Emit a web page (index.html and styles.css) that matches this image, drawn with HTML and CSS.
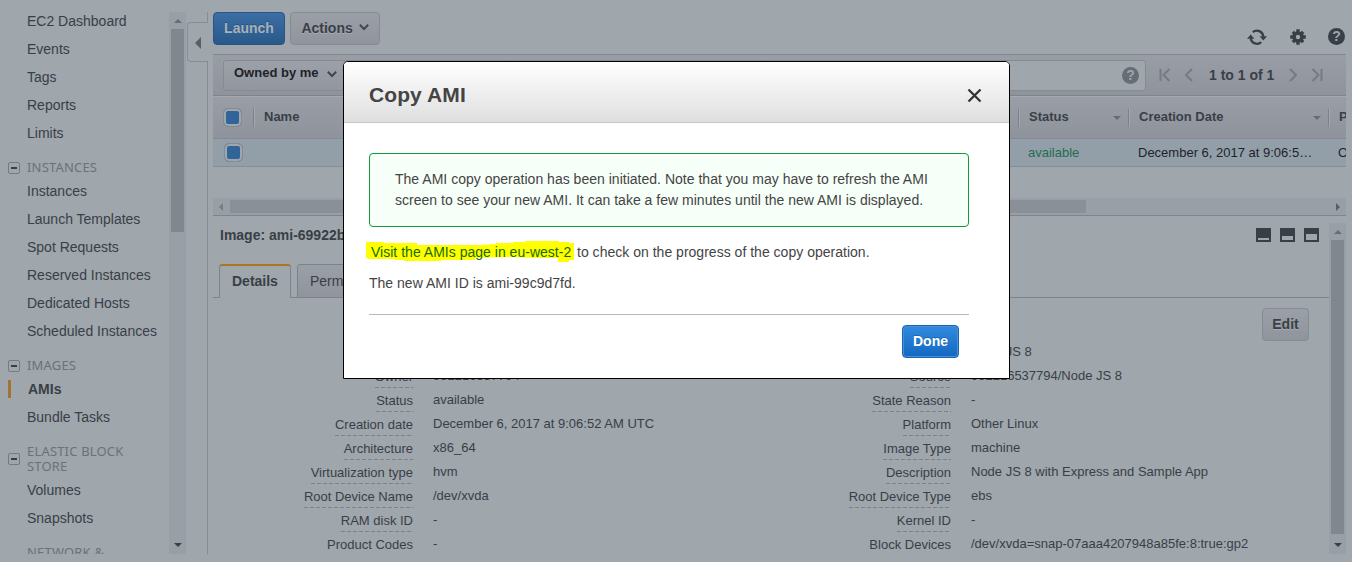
FILE: index.html
```
<!DOCTYPE html>
<html lang="en">
<head>
<meta charset="utf-8">
<title>EC2 Management Console</title>
<link rel="stylesheet" href="styles.css">
</head>
<body>
<div class="console">
  <aside class="sidebar">
    <nav class="nav">
      <a class="item">EC2 Dashboard</a><a class="item">Events</a><a class="item">Tags</a><a class="item">Reports</a><a class="item">Limits</a>
      <h3 class="group"><i class="minus"></i><span>INSTANCES</span></h3>
      <a class="item">Instances</a><a class="item">Launch Templates</a><a class="item">Spot Requests</a><a class="item">Reserved Instances</a><a class="item">Dedicated Hosts</a><a class="item">Scheduled Instances</a>
      <h3 class="group"><i class="minus"></i><span>IMAGES</span></h3>
      <a class="item current">AMIs</a><a class="item">Bundle Tasks</a>
      <h3 class="group"><i class="minus"></i><span>ELASTIC BLOCK STORE</span></h3>
      <a class="item">Volumes</a><a class="item">Snapshots</a>
      <h3 class="group"><span>NETWORK &amp;</span></h3>
    </nav>
    <div class="vscroll"><i class="up"></i><i class="vthumb nav-thumb"></i><i class="down"></i></div>
  </aside>
  <div class="gutter"><div class="gutter-top"></div><div class="handle"><i class="left-arrow"></i></div><div class="gutter-line"></div></div>
  <main class="main">
    <div class="toolbar">
      <button class="btn primary launch">Launch</button>
      <button class="btn actions">Actions <svg width="10" height="7" viewBox="0 0 10 7"><path d="M.8.8L5 5 9.200.8" fill="none" stroke="#40464e" stroke-width="2"/></svg></button>
      <div class="tools">
        <svg width="20" height="18" viewBox="0 0 20 18"><path d="M3.700 10.500A6.400 6.400 0 0 0 14.200 14.200M16.300 8.500A6.400 6.400 0 0 0 5.800 4.200" fill="none" stroke="#393f47" stroke-width="2.300"/><path d="M0 10.700h7.400L3.700 6.500zM12.600 8.300H20l-3.700 4.200z" fill="#393f47"/></svg>
        <svg width="16" height="16" viewBox="0 0 16 16"><g fill="#393f47"><circle cx="8" cy="8" r="5.800"/><path d="M6.300.2h3.400v15.600H6.300zM.2 6.300h15.600v3.400H.2z"/><path d="M6.300.7h3.400v14.600H6.300zM.7 6.300h14.600v3.400H.7z" transform="rotate(45 8 8)"/></g><circle cx="8" cy="8" r="2.200" fill="#9fa6ac"/></svg>
        <span class="help dark">?</span>
      </div>
    </div>
    <div class="filter">
      <div class="owned">Owned by me <svg width="10" height="7" viewBox="0 0 10 7"><path d="M.8.8L5 5 9.200.8" fill="none" stroke="#40464e" stroke-width="2"/></svg></div>
      <div class="search"><span class="help">?</span></div>
      <div class="pager">
        <svg width="12" height="14" viewBox="0 0 12 14"><path d="M1.500 1v12M10.500 1l-6 6 6 6"/></svg>
        <svg width="8" height="14" viewBox="0 0 8 14"><path d="M7 1L1 7l6 6"/></svg>
        <b>1 to 1 of 1</b>
        <svg width="8" height="14" viewBox="0 0 8 14"><path d="M1 1l6 6-6 6"/></svg>
        <svg width="12" height="14" viewBox="0 0 12 14"><path d="M10.500 1v12M1.500 1l6 6-6 6"/></svg>
      </div>
    </div>
    <div class="row head"><div class="cell"><i class="check"></i></div><div class="cell name"><span>Name</span></div><div class="cell status"><span>Status</span><i class="sort"></i></div><div class="cell date"><span>Creation Date</span><i class="sort"></i></div><div class="cell plat"><span>Platform</span></div></div>
    <div class="row data"><div class="cell"><i class="check"></i></div><div class="cell name"></div><div class="cell status">available</div><div class="cell date">December 6, 2017 at 9:06:5…</div><div class="cell plat">Other</div></div>
    <div class="hscroll"><i class="hleft"></i><i class="hthumb"></i><i class="hright"></i></div>
    <section class="details">
      <div class="pane">
        <div class="pane-top"><b class="image">Image: ami-69922b0d</b><i class="win small"></i><i class="win half"></i><i class="win full"></i></div>
        <div class="tabs"><div class="edge"></div><div class="tab active">Details</div><div class="gap"></div><div class="tab">Permissions</div><div class="fill"></div></div>
        <div class="edit-line"><button class="btn edit">Edit</button></div>
        <div class="facts">
          <dl>
            <dt><span>AMI ID</span></dt><dd>ami-69922b0d</dd>
            <dt><span>Owner</span></dt><dd>982216537794</dd>
            <dt><span>Status</span></dt><dd>available</dd>
            <dt><span>Creation date</span></dt><dd>December 6, 2017 at 9:06:52 AM UTC</dd>
            <dt><span>Architecture</span></dt><dd>x86_64</dd>
            <dt><span>Virtualization type</span></dt><dd>hvm</dd>
            <dt><span>Root Device Name</span></dt><dd>/dev/xvda</dd>
            <dt><span>RAM disk ID</span></dt><dd>-</dd>
            <dt><span>Product Codes</span></dt><dd>-</dd>
          </dl>
          <dl>
            <dt><span>AMI Name</span></dt><dd>Node JS 8</dd>
            <dt><span>Source</span></dt><dd>982216537794/Node JS 8</dd>
            <dt><span>State Reason</span></dt><dd>-</dd>
            <dt><span>Platform</span></dt><dd>Other Linux</dd>
            <dt><span>Image Type</span></dt><dd>machine</dd>
            <dt><span>Description</span></dt><dd>Node JS 8 with Express and Sample App</dd>
            <dt><span>Root Device Type</span></dt><dd>ebs</dd>
            <dt><span>Kernel ID</span></dt><dd>-</dd>
            <dt><span>Block Devices</span></dt><dd>/dev/xvda=snap-07aaa4207948a85fe:8:true:gp2</dd>
          </dl>
        </div>
      </div>
      <div class="vscroll pane-scroll"><i class="up"></i><i class="vthumb pane-thumb"></i><i class="down"></i></div>
    </section>
  </main>
</div>
<div class="modal">
  <header class="modal-head"><h2>Copy AMI</h2><svg width="15" height="15" viewBox="0 0 15 15"><path d="M1.500 1.500l12 12M13.500 1.500l-12 12" stroke="#333" stroke-width="2.300"/></svg></header>
  <div class="modal-body">
    <div class="notice"><div>The AMI copy operation has been initiated. Note that you may have to refresh the AMI</div><div>screen to see your new AMI. It can take a few minutes until the new AMI is displayed.</div></div>
    <p class="visit"><span class="marked"><svg class="marker" width="208" height="22" viewBox="0 0 208 22"><path d="M0 1h17l1 1h33v2h62l17-1V2h17V1h12V0h34v1h10v1h5v17h-5v2h-11v-4h-18l-34-1-31 1v2H75v1H38v-1H29v-1H2v-1H0z" fill="#ff0"/></svg><span class="link">Visit the AMIs page in eu-west-2</span></span><span class="rest">to check on the progress of the copy operation.</span></p>
    <p class="newid">The new AMI ID is ami-99c9d7fd.</p>
    <div class="modal-foot"><button class="btn done">Done</button></div>
  </div>
</div>
</body>
</html>
```
FILE: styles.css
```
* { box-sizing: border-box; }
body { margin: 0; width: 1352px; height: 562px; overflow: hidden; background: #9fa6ac; color: #393f47; font: 14px "Liberation Sans", Arial, sans-serif; }
i { display: block; font-style: normal; }
svg { flex: none; }
h2, h3, p, dl, dd { margin: 0; }
.console { display: flex; width: 1346px; height: 554px; overflow: hidden; }
.sidebar { display: flex; width: 186px; height: 554px; }
.nav { width: 169px; padding-top: 7px; overflow: hidden; }
.item { display: block; height: 28px; line-height: 28px; padding-left: 27px; white-space: nowrap; }
.current { font-weight: bold; padding-left: 28px; background: linear-gradient(#a37431, #a37431) 8px 5px / 3px 18px no-repeat; }
.group { display: flex; align-items: center; margin: 13px 0 2px; font: 13px/15px "Noto Sans", sans-serif; color: #6b7278; letter-spacing: .18px; }
.group span { width: 120px; margin-left: 7px; }
.group > span:first-child { margin-left: 27px; }
.minus { width: 12px; height: 12px; border: 1px solid #757b82; border-radius: 2px; margin-left: 8px; background: linear-gradient(#393f47, #393f47) 2px 4px / 6px 2px no-repeat; }
.vscroll { display: flex; flex-direction: column; align-items: center; width: 17px; margin-top: 12px; background: #989fa6; }
.up { border: 4px solid transparent; border-top: 0; border-bottom-color: #666d75; margin: 7px 0 6px; }
.down { border: 4px solid transparent; border-bottom: 0; border-top-color: #393f47; margin: auto 0 7px; }
.vthumb { width: 13px; background: #80878e; }
.nav-thumb { height: 203px; }
.gutter { width: 22px; display: flex; flex-direction: column; align-items: flex-end; padding-top: 12px; }
.gutter-top { height: 10px; border-right: 1px solid #878d95; }
.handle { width: 21px; height: 40px; border: 1px solid #878d95; border-right: 0; border-radius: 4px 0 0 4px; padding: 14px 0 0 7px; }
.left-arrow { width: 6px; border: 6px solid transparent; border-left: 0; border-right-color: #595f68; }
.gutter-line { flex: 1; border-right: 1px solid #878d95; }
.main { width: 1138px; padding-left: 5px; overflow: hidden; }
.toolbar { display: flex; gap: 5px; height: 54px; padding-top: 12px; }
.btn { height: 33px; border: 1px solid #858a93; border-radius: 4px; padding: 0 0 2px; background: linear-gradient(#9b9fa7, #90949d); color: #393f47; font: bold 14px "Liberation Sans", Arial, sans-serif; text-shadow: 0 1px #a7adb4; }
.primary { width: 72px; border-color: #285584; background: linear-gradient(#3b6ea5, #285989); color: #a9b0b7; text-shadow: 0 -1px #27527c; }
.actions { width: 90px; }
.actions svg { margin: 0 0 2px 2px; }
.tools { display: flex; align-items: center; margin-left: auto; gap: 22px; padding: 16px 1px 0 0; height: 33px; }
.tools svg:first-child { margin-right: 1px; }
.help { width: 17px; height: 17px; border-radius: 50%; background: #666d75; color: #9fa6ac; font: bold 14px/17px "Liberation Sans", Arial, sans-serif; text-align: center; }
.dark { background: #393f47; }
.filter { display: flex; align-items: center; height: 42px; padding-left: 10px; background: linear-gradient(#999da5, #8f939c); border-top: 1px solid #83878f; border-bottom: 1px solid #80858d; }
.owned { width: 122px; height: 31px; border: 1px solid #858a93; border-radius: 3px 0 0 3px; padding: 4px 0 0 10px; background: linear-gradient(#9ca0a8, #92969f); color: #1e2329; font-weight: bold; font-size: 13px; white-space: nowrap; }
.owned svg { margin: 0 0 -1px 5px; }
.search { display: flex; justify-content: flex-end; align-items: center; width: 801px; height: 31px; border: 1px solid #858a93; border-radius: 0 3px 3px 0; background: #9fa6ac; padding-right: 6px; }
.pager { display: flex; align-items: center; margin-left: 13px; }
.pager path { fill: none; stroke: #757b83; stroke-width: 2; }
.pager svg + svg { margin-left: 14px; }
.pager b { width: 66px; margin: 0 14px 0 16px; white-space: nowrap; }
.row { display: grid; grid-template-columns: 40px 765px 110px 200px 18px; }
.head { height: 43px; align-items: center; border-top: 1px solid #a4a8b0; border-bottom: 1px solid #858a93; background: linear-gradient(#999da5, #8f939c); font-weight: bold; font-size: 13px; }
.head .cell + .cell { display: flex; align-items: center; justify-content: space-between; height: 18px; border-left: 1px solid #7c8189; padding: 0 7px 0 10px; box-shadow: inset 1px 0 #a4a8b0; white-space: nowrap; }
.head span { padding-bottom: 2px; }
.sort { border: 4px solid transparent; border-bottom: 0; border-top-color: #666d75; }
.check { width: 19px; height: 19px; border: 1px solid #858a93; border-radius: 5px; margin-left: 10px; background: #316499; box-shadow: inset 0 0 0 2px #9fa6ac; }
.data { height: 28px; align-items: center; background: #929fa9; border-bottom: 1px solid #858d95; color: #1e2329; font-size: 13px; }
.data .cell { white-space: nowrap; overflow: hidden; }
.data .check { margin-left: 11px; }
.data .name, .data .status, .data .date, .data .plat { padding-left: 10px; }
.data .status { color: #236c50; }
.hscroll { display: flex; align-items: center; height: 18px; margin-top: 31px; padding: 0 6px; background: #999fa6; border-bottom: 1px solid #80858d; }
.hleft, .hright { border: 4px solid transparent; }
.hleft { border-left: 0; border-right-color: #767c84; }
.hright { border-right: 0; border-left-color: #595f68; margin-left: auto; }
.hthumb { width: 856px; height: 13px; margin-left: 7px; background: #8a8f98; }
.details { display: flex; height: 338px; }
.pane { width: 1116px; }
.pane-scroll { margin-top: 7px; }
.pane-thumb { height: 294px; }
.pane-top { display: flex; align-items: flex-start; height: 48px; padding: 12px 10px 0 7px; gap: 9px; }
.image { flex: 1; margin-top: -1px; }
.win { width: 15px; height: 14px; border: 2px solid #393f47; }
.small { border-top-width: 10px; }
.half { border-top-width: 8px; }
.full { border-top-width: 6px; }
.tabs { display: flex; height: 34px; }
.edge, .gap, .fill { border-bottom: 1px solid #7d838b; }
.edge { width: 6px; }
.gap { width: 6px; }
.fill { flex: 1; }
.tab { width: 110px; border: 1px solid #7d838b; border-radius: 3px 3px 0 0; padding: 8px 0 0 12px; background: linear-gradient(#9a9ea6, #90949d); }
.active { width: 72px; border-bottom: 0; border-top: 2px solid #aa7525; background: none; font-weight: bold; padding-top: 7px; }
.edit-line { display: flex; justify-content: flex-end; height: 42px; padding: 10px 20px 0 0; }
.edit { width: 47px; }
.facts { display: flex; font-size: 13px; }
.facts dl { display: grid; grid-template-columns: 200px 338px; grid-auto-rows: 24px; white-space: nowrap; }
.facts dt { text-align: right; line-height: 16px; padding-top: 5px; }
.facts dt span { display: inline-block; height: 19px; background: repeating-linear-gradient(90deg, #7b8188 0 4px, transparent 4px 6px) 0 100% / 100% 1px no-repeat; }
.facts dd { padding: 4px 0 0 20px; line-height: 16px; }
.modal { position: absolute; left: 343px; top: 61px; width: 667px; height: 318px; border: 1px solid #000; border-radius: 5px 5px 0 0; background: #fff; color: #444; overflow: hidden; letter-spacing: .015px; }
.modal-head { display: flex; justify-content: space-between; align-items: center; height: 61px; padding: 6px 27px 0 25px; background: linear-gradient(#fff, #dfdfdf); border-bottom: 1px solid #c8c8c8; }
.modal-head h2 { font-size: 21px; line-height: 24px; letter-spacing: .1px; }
.modal-body { padding: 30px 40px 0 25px; white-space: nowrap; }
.notice { height: 74px; border: 1px solid #109b3b; border-radius: 4px; background: #f6fff8; padding: 15px 0 0 25px; line-height: 21px; }
.visit { display: flex; margin-top: 15px; line-height: 20px; }
.marked { position: relative; width: 208px; padding-left: 2px; }
.marker { position: absolute; left: -3px; top: -1px; }
.link { position: relative; color: #176b09; }
.newid { margin-top: 11px; line-height: 20px; }
.modal-foot { display: flex; justify-content: flex-end; margin-top: 21px; border-top: 1px solid #b7b7b7; padding: 10px 10px 0 0; }
.done { width: 57px; color: #fff; border-color: #1764b5; background: linear-gradient(#318ae0, #1467c0); text-shadow: 0 -1px #1765b5; box-shadow: inset 0 0 0 1px #4a90d5; }
```
